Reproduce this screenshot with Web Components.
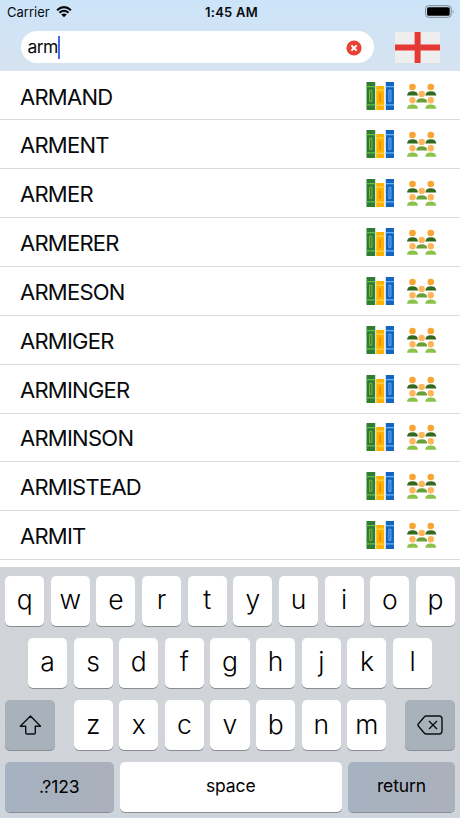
<!DOCTYPE html>
<html lang="en">
<head>
<meta charset="utf-8">
<title>Surnames</title>
<style>
    html, body {
        margin: 0;
        height: 100%;
        overflow: hidden;
        background: #fff;
    }
</style>
</head>
<body>
<surname-app></surname-app>

<script>
// Top line of the phone: carrier, clock, battery
class StatusBar extends HTMLElement {
    constructor() {
        super();
        this.attachShadow({ mode: 'open' });
        this.shadowRoot.innerHTML = `
            <style>
                :host {
                    display: grid;
                    grid-template-columns: 1fr auto 1fr;
                    align-items: center;
                    height: 24px;
                    padding: 0 5px 0 7px;
                    font-size: 13px;
                    line-height: 24px;
                }
                .carrier { display: flex; align-items: center; gap: 6px; letter-spacing: 0; }
                .clock { font-weight: 600; letter-spacing: 0.25px; padding-left: 1px; }
                .battery { justify-self: end; }
                svg { display: block; }
            </style>
            <div class="carrier">
                <span>Carrier</span>
                <svg width="16" height="12" viewBox="0 0 16 12">
                    <path d="M1 4.3Q8-2 15 4.3M3.4 6.8Q8 2.7 12.6 6.8" fill="none" stroke="#06080b" stroke-width="2"/>
                    <path d="M8 11.3 5.2 8.5Q8 6.3 10.8 8.5Z" fill="#06080b"/>
                </svg>
            </div>
            <div class="clock"><slot></slot></div>
            <svg class="battery" width="30" height="14" viewBox="0 0 30 14">
                <rect x="0.6" y="0.7" width="25.6" height="11.6" rx="3" fill="none" stroke="#7c8790"/>
                <rect x="2.1" y="2.2" width="22.6" height="8.6" rx="1.5" fill="#000"/>
                <path d="M27.8 4.5Q29.3 6.5 27.8 8.5Z" fill="#7c8790"/>
            </svg>
        `;
    }
}
customElements.define('status-bar', StatusBar);

// Rounded search box with the typed text, caret and clear button
class SearchField extends HTMLElement {
    constructor() {
        super();
        this.attachShadow({ mode: 'open' });
        this.shadowRoot.innerHTML = `
            <style>
                :host {
                    display: flex;
                    align-items: center;
                    box-sizing: border-box;
                    width: 353px;
                    height: 32px;
                    padding: 0 12px 0 7px;
                    border-radius: 16px;
                    background: #fff;
                    font-size: 17.5px;
                    line-height: 32px;
                }
                .text { letter-spacing: -0.55px; }
                .caret { width: 2px; height: 23px; background: #4668e2; }
                svg { margin-left: auto; margin-top: 2px; }
            </style>
            <span class="text"><slot></slot></span><span class="caret"></span>
            <svg width="16" height="16" viewBox="0 0 16 16">
                <circle cx="8" cy="8" r="7.6" fill="#ea4335"/>
                <path d="M5.4 5.4 10.6 10.6M10.6 5.4 5.4 10.6" stroke="#fff" stroke-width="2"/>
            </svg>
        `;
    }
}
customElements.define('search-field', SearchField);

class EnglandFlag extends HTMLElement {
    constructor() {
        super();
        this.attachShadow({ mode: 'open' });
        this.shadowRoot.innerHTML = `
            <style>
                :host { display: block; }
                svg { display: block; }
            </style>
            <svg width="45" height="31" viewBox="0 0 45 31">
                <rect width="45" height="31" fill="#eee"/>
                <path d="M0 15.5H45M22.6 0V31" stroke="#e53935" stroke-width="6"/>
            </svg>
        `;
    }
}
customElements.define('england-flag', EnglandFlag);

// One surname with its "records" and "family" icons
class SurnameRow extends HTMLElement {
    constructor() {
        super();
        this.attachShadow({ mode: 'open' });
        this.shadowRoot.innerHTML = `
            <style>
                :host {
                    display: flex;
                    align-items: center;
                    flex: none;
                    box-sizing: border-box;
                    height: 48.85px;
                    padding: 0 23px 0 20px;
                    border-bottom: 1px solid #d9dadb;
                    font-size: 22px;
                    letter-spacing: -0.75px;
                }
                .name { flex: 1; padding-top: 2px; }
                .books { margin-right: 12px; }
            </style>
            <span class="name"><slot></slot></span>
            <svg class="books" width="29" height="28" viewBox="0 0 29 28">
                <path d="M.5 0h8.7v28H.5z" fill="#2e7d32"/>
                <path d="M10.2 4h8v24h-8z" fill="#ffb300"/>
                <path d="M19.8 0H28v28h-8.2z" fill="#1565c0"/>
                <path d="M.5 4.6h8.7M.5 22.8h8.7" stroke="#66bb4a" stroke-width="1.2"/>
                <path d="M10.2 8.2h8M10.2 23.2h8" stroke="#ffd54f" stroke-width="1.2"/>
                <path d="M19.8 4.6H28M19.8 22.8H28" stroke="#64b5f6" stroke-width="1.2"/>
                <path d="M3.6 8.3h2.3v11H3.6z" fill="none" stroke="#81b83e"/>
                <path d="M14.2 11.5v8.5" stroke="#f57c00" stroke-width="1.3"/>
                <path d="M22.9 8.3h2v11h-2z" fill="none" stroke="#64b5f6"/>
            </svg>
            <svg width="30" height="26" viewBox="0 0 30 26">
                <g fill="#f9a531"><circle cx="5.5" cy="4" r="3.3"/><circle cx="23.8" cy="4" r="3.3"/></g>
                <g fill="#33691e">
                    <path d="M0 12.6Q.3 8.3 5.5 8.3T11 12.6Z"/>
                    <path d="M18.3 12.6Q18.6 8.3 23.8 8.3T29.3 12.6Z"/>
                </g>
                <g fill="#ffb55a"><circle cx="5.5" cy="17.2" r="3.2"/><circle cx="23.8" cy="17.2" r="3.2"/><circle cx="14.7" cy="10.9" r="3.2"/></g>
                <path d="M9.2 19.4Q9.5 15.2 14.7 15.2T20.2 19.4Z" fill="#689f38"/>
                <g fill="#8bc34a">
                    <path d="M0 25.7Q.3 21.5 5.5 21.5T11 25.7Z"/>
                    <path d="M18.3 25.7Q18.6 21.5 23.8 21.5T29.3 25.7Z"/>
                </g>
            </svg>
        `;
    }
}
customElements.define('surname-row', SurnameRow);

class KeyCap extends HTMLElement {
    constructor() {
        super();
        this.attachShadow({ mode: 'open' });
        this.shadowRoot.innerHTML = `
            <style>
                :host {
                    display: flex;
                    align-items: center;
                    justify-content: center;
                    box-sizing: border-box;
                    flex: 0 0 39.15px;
                    height: 50px;
                    padding-bottom: 2px;
                    border-radius: 5px;
                    background: #fff;
                    box-shadow: 0 1px 0 #898c90;
                    font-size: 26.5px;
                    font-weight: 350;
                    line-height: 1;
                    color: #000;
                }
                :host([kind="control"]) { flex-basis: 49.5px; padding: 0; background: #a9b1ba; }
                :host([kind="word"]) { font-size: 17.5px; font-weight: 400; letter-spacing: -0.1px; }
                :host([tone="dark"]) { background: linear-gradient(90deg, #a5b2c1, #abb0bb); }
            </style>
            <slot></slot>
        `;
    }
}
customElements.define('key-cap', KeyCap);

class KeyBoard extends HTMLElement {
    constructor() {
        super();
        this.attachShadow({ mode: 'open' });
        const keys = letters => [...letters].map(c => `<key-cap>${c}</key-cap>`).join('');
        this.shadowRoot.innerHTML = `
            <style>
                :host {
                    display: flex;
                    flex-direction: column;
                    gap: 12.2px;
                    box-sizing: border-box;
                    height: 251px;
                    padding: 8.5px 5px 0;
                    background: linear-gradient(#d0d4d8, #d1d4d8 60%, #cfd5dd);
                }
                .row { display: flex; justify-content: center; gap: 6.5px; }
                .third { justify-content: space-between; }
                .group { display: flex; gap: 6.5px; }
                .symbols { flex: 0 0 108.5px; padding-bottom: 0; }
                .space { flex: 1; }
                .return { flex: 0 0 107px; }
                svg { display: block; }
            </style>
            <div class="row">${keys('qwertyuiop')}</div>
            <div class="row">${keys('asdfghjkl')}</div>
            <div class="row third">
                <key-cap kind="control">
                    <svg width="24" height="22" viewBox="0 0 24 22">
                        <path d="M12.5 2 22.5 12.3H17.3V18.8Q17.3 20 16.1 20H8.9Q7.7 20 7.7 18.8V12.3H2.3Z" fill="none" stroke="#0b1016" stroke-width="1.4" stroke-linejoin="round"/>
                    </svg>
                </key-cap>
                <div class="group">${keys('zxcvbnm')}</div>
                <key-cap kind="control">
                    <svg width="26" height="20" viewBox="0 0 26 20">
                        <path d="M9.2 1H22Q25 1 25 4V16Q25 19 22 19H9.2Q8 19 7.2 18L1.3 11Q.6 10 1.3 9L7.2 2Q8 1 9.2 1Z" fill="none" stroke="#0b1016" stroke-width="1.4"/>
                        <path d="M12 6 20 14M20 6 12 14" stroke="#0b1016" stroke-width="1.4"/>
                    </svg>
                </key-cap>
            </div>
            <div class="row">
                <key-cap class="symbols" kind="word" tone="dark">.?123</key-cap>
                <key-cap class="space" kind="word">space</key-cap>
                <key-cap class="return" kind="word" tone="dark">return</key-cap>
            </div>
        `;
    }
}
customElements.define('key-board', KeyBoard);

class SurnameApp extends HTMLElement {
    constructor() {
        super();
        this.attachShadow({ mode: 'open' });
        const names = ['ARMAND', 'ARMENT', 'ARMER', 'ARMERER', 'ARMESON', 'ARMIGER', 'ARMINGER', 'ARMINSON', 'ARMISTEAD', 'ARMIT'];
        this.shadowRoot.innerHTML = `
            <style>
                :host {
                    display: flex;
                    flex-direction: column;
                    width: 460px;
                    height: 818px;
                    overflow: hidden;
                    font-family: Inter, "Liberation Sans", sans-serif;
                    color: #080a0d;
                }
                header {
                    flex: none;
                    height: 71px;
                    background: linear-gradient(#cce4f9, #d7e3f0);
                }
                .tools {
                    display: flex;
                    align-items: center;
                    justify-content: space-between;
                    padding: 7px 20px 0 20.5px;
                }
                main {
                    display: flex;
                    flex-direction: column;
                    flex: 1;
                    min-height: 0;
                    padding-top: 0.6px;
                    overflow: hidden;
                }
                key-board { flex: none; }
            </style>
            <header>
                <status-bar>1:45 AM</status-bar>
                <div class="tools">
                    <search-field>arm</search-field>
                    <england-flag></england-flag>
                </div>
            </header>
            <main>${names.map(n => `<surname-row>${n}</surname-row>`).join('')}</main>
            <key-board></key-board>
        `;
    }
}
customElements.define('surname-app', SurnameApp);
</script>
</body>
</html>
